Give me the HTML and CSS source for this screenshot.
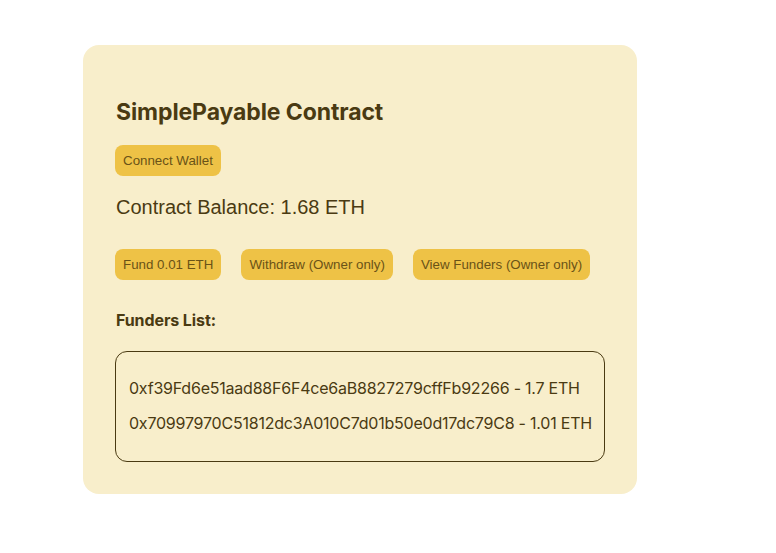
FILE: index.html
```html
<!DOCTYPE html>
<html>
<head>
<meta charset="utf-8">
<link rel="stylesheet" href="styles.css">
</head>
<body>
<div class="card">
  <h2 class="title">SimplePayable Contract</h2>
  <button class="btn">Connect Wallet</button>
  <p class="balance">Contract Balance: 1.68 ETH</p>
  <div class="actions">
    <button class="btn">Fund 0.01 ETH</button>
    <button class="btn">Withdraw (Owner only)</button>
    <button class="btn">View Funders (Owner only)</button>
  </div>
  <h3 class="subtitle">Funders List:</h3>
  <ul class="funders">
    <li>0xf39Fd6e51aad88F6F4ce6aB8827279cffFb92266 - 1.7 ETH</li>
    <li>0x70997970C51812dc3A010C7d01b50e0d17dc79C8 - 1.01 ETH</li>
  </ul>
</div>
</body>
</html>
```
FILE: styles.css
```css
html, body { background: #ffffff; }
body {
  margin: 0;
  padding: 45px 0 0 83px;
  font-family: Inter, "Liberation Sans", sans-serif;
  color: #4a3a12;
}
.card {
  box-sizing: border-box;
  width: 554px;
  background: #f8eecb;
  border-radius: 16px;
  padding: 32px 32px 32px 32px;
  display: flex;
  flex-direction: column;
  align-items: flex-start;
}
.title {
  margin: 21px 0 0 1px;
  font-size: 23px;
  line-height: 28px;
  font-weight: 700;
  letter-spacing: -0.1px;
  color: #4a3a12;
}
.btn {
  font-family: "Liberation Sans", Arial, sans-serif;
  font-size: 13.333px;
  line-height: 15px;
  padding: 8px 8px;
  border: none;
  border-radius: 8px;
  background: #eec246;
  color: #6a5217;
  cursor: pointer;
}
.title + .btn { margin-top: 19px; }
.balance {
  margin: 19px 0 0 1px;
  font-family: "Liberation Sans", Arial, sans-serif;
  font-size: 20px;
  line-height: 24px;
  color: #4a3a12;
}
.actions {
  display: flex;
  gap: 20px;
  margin-top: 30px;
}
.subtitle {
  margin: 30px 0 0 1px;
  font-size: 16px;
  line-height: 20px;
  font-weight: 700;
  letter-spacing: -0.1px;
}
.funders {
  list-style: none;
  box-sizing: border-box;
  align-self: stretch;
  margin: 21px 0 0 0;
  padding: 26px 13px 28px 13px;
  border: 1px solid #4a3a12;
  border-radius: 12px;
  display: flex;
  flex-direction: column;
  gap: 15px;
  font-size: 16px;
  line-height: 20px;
  letter-spacing: -0.22px;
  white-space: nowrap;
}
```
